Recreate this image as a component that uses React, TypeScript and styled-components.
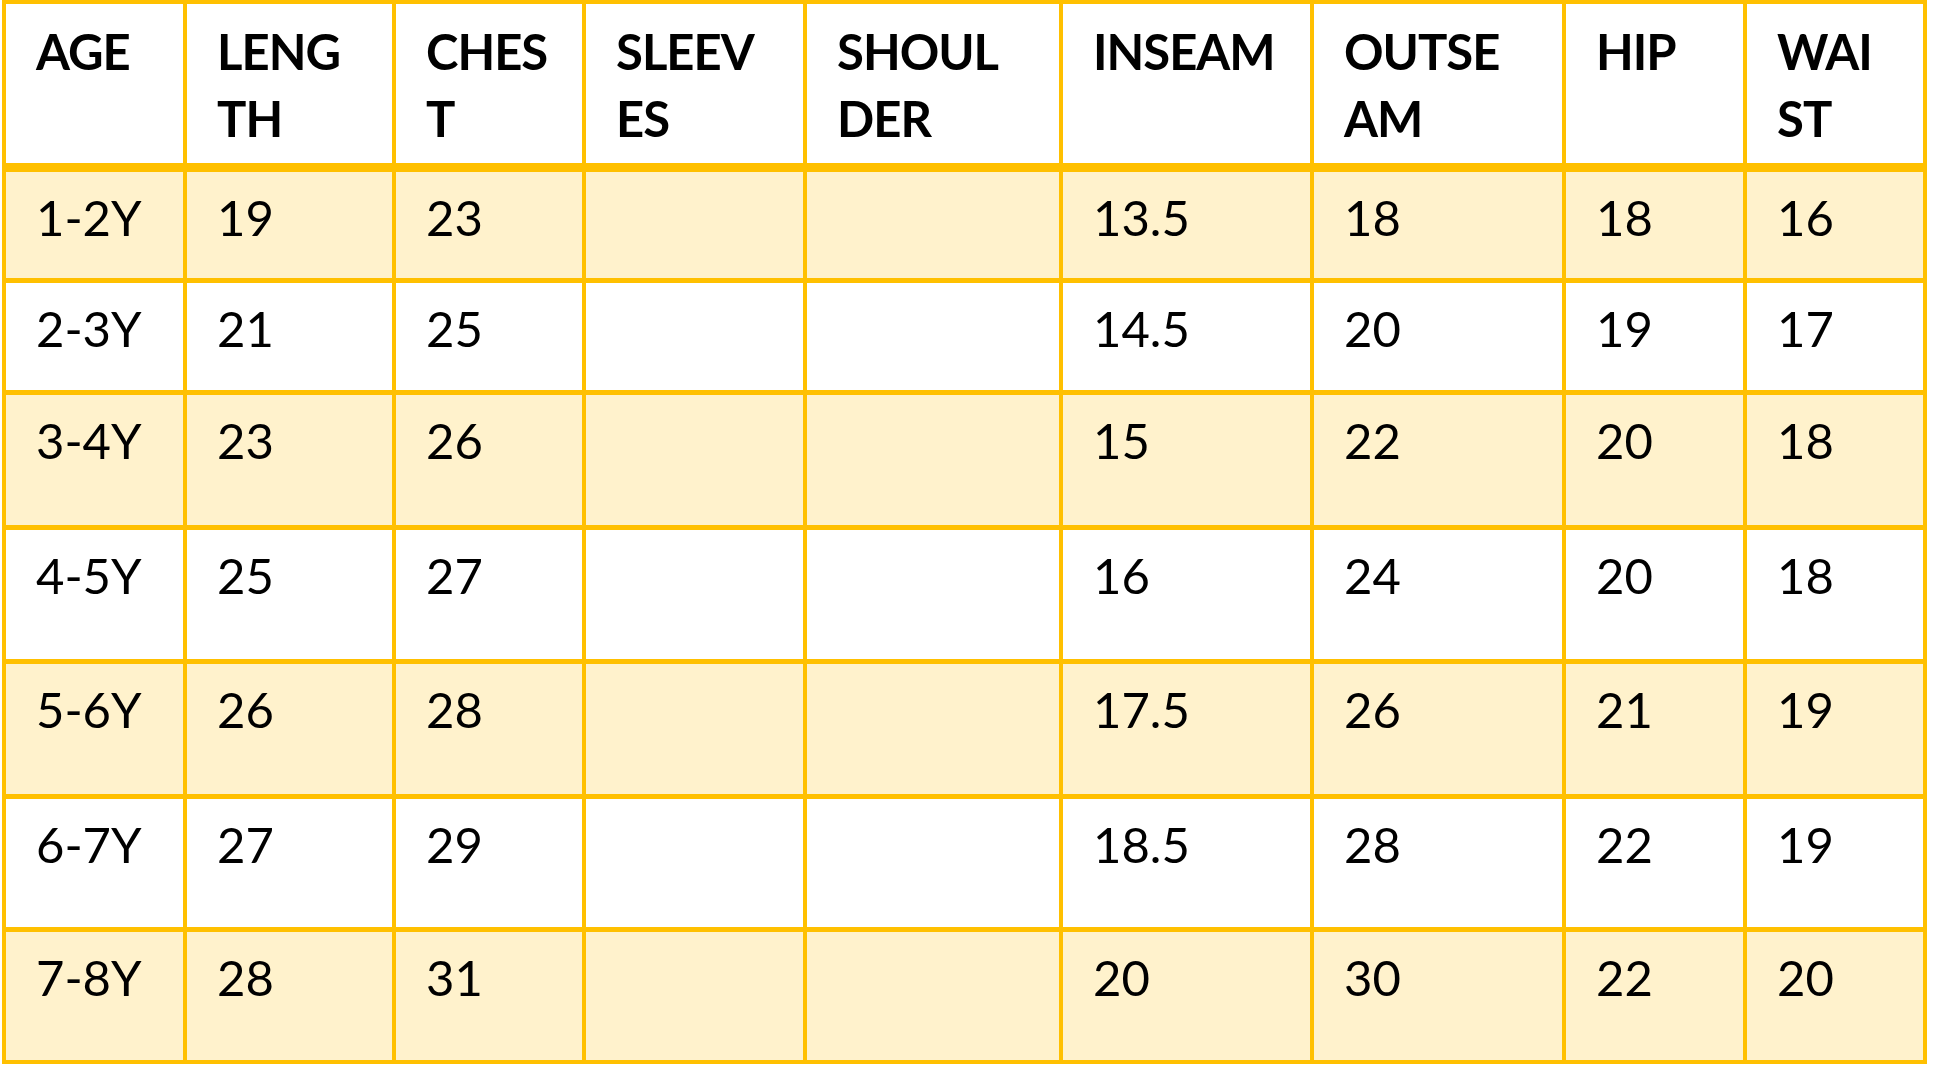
import React from 'react';
import styled, { createGlobalStyle } from 'styled-components';

const GlobalStyle = createGlobalStyle`
  html, body {
    margin: 0;
    padding: 0;
    background: #ffffff;
  }
  body {
    font-family: Lato, "Open Sans", sans-serif;
    color: #000000;
  }
`

const SizeGrid = styled.div`
  display: grid;
  grid-template-columns: 177px 205px 186px 217px 252px 247px 248px 177px 176px;
  grid-template-rows: 163px 106px 107px 130px 129px 130px 128px 128px;
  column-gap: 4px;
  row-gap: 5px;
  width: max-content;
  margin-left: 2px;
  padding: 4px;
  background: #ffc000;
`

const HeadCell = styled.div`
  background: #ffffff;
  margin-bottom: 4px;
  padding: 14px 0 0 30px;
  font-size: 49px;
  line-height: 67px;
  font-weight: 700;
  letter-spacing: -1px;
  white-space: nowrap;
`

const BodyCell = styled.div<{ $shaded: boolean }>`
  background: ${(p) => (p.$shaded ? '#fff2cc' : '#ffffff')};
  padding: 12px 0 0 30px;
  font-size: 49px;
  line-height: 67px;
  font-weight: 400;
  white-space: nowrap;
`

const headers: string[][] = [
    ['AGE'],
    ['LENG', 'TH'],
    ['CHES', 'T'],
    ['SLEEV', 'ES'],
    ['SHOUL', 'DER'],
    ['INSEAM'],
    ['OUTSE', 'AM'],
    ['HIP'],
    ['WAI', 'ST'],
]

const rows: string[][] = [
    ['1-2Y', '19', '23', '', '', '13.5', '18', '18', '16'],
    ['2-3Y', '21', '25', '', '', '14.5', '20', '19', '17'],
    ['3-4Y', '23', '26', '', '', '15', '22', '20', '18'],
    ['4-5Y', '25', '27', '', '', '16', '24', '20', '18'],
    ['5-6Y', '26', '28', '', '', '17.5', '26', '21', '19'],
    ['6-7Y', '27', '29', '', '', '18.5', '28', '22', '19'],
    ['7-8Y', '28', '31', '', '', '20', '30', '22', '20'],
]

export default function App() {
    return (
        <>
            <GlobalStyle/>
            <SizeGrid>
                {headers.map((lines, i) => (
                    <HeadCell key={'h' + i}>
                        {lines.map((line, j) => (
                            <React.Fragment key={j}>
                                {j > 0 ? <br/> : null}
                                {line}
                            </React.Fragment>
                        ))}
                    </HeadCell>
                ))}
                {rows.map((row, r) =>
                    row.map((value, c) => (
                        <BodyCell key={r + '-' + c} $shaded={r % 2 === 0}>{value}</BodyCell>
                    ))
                )}
            </SizeGrid>
        </>
    )
}
